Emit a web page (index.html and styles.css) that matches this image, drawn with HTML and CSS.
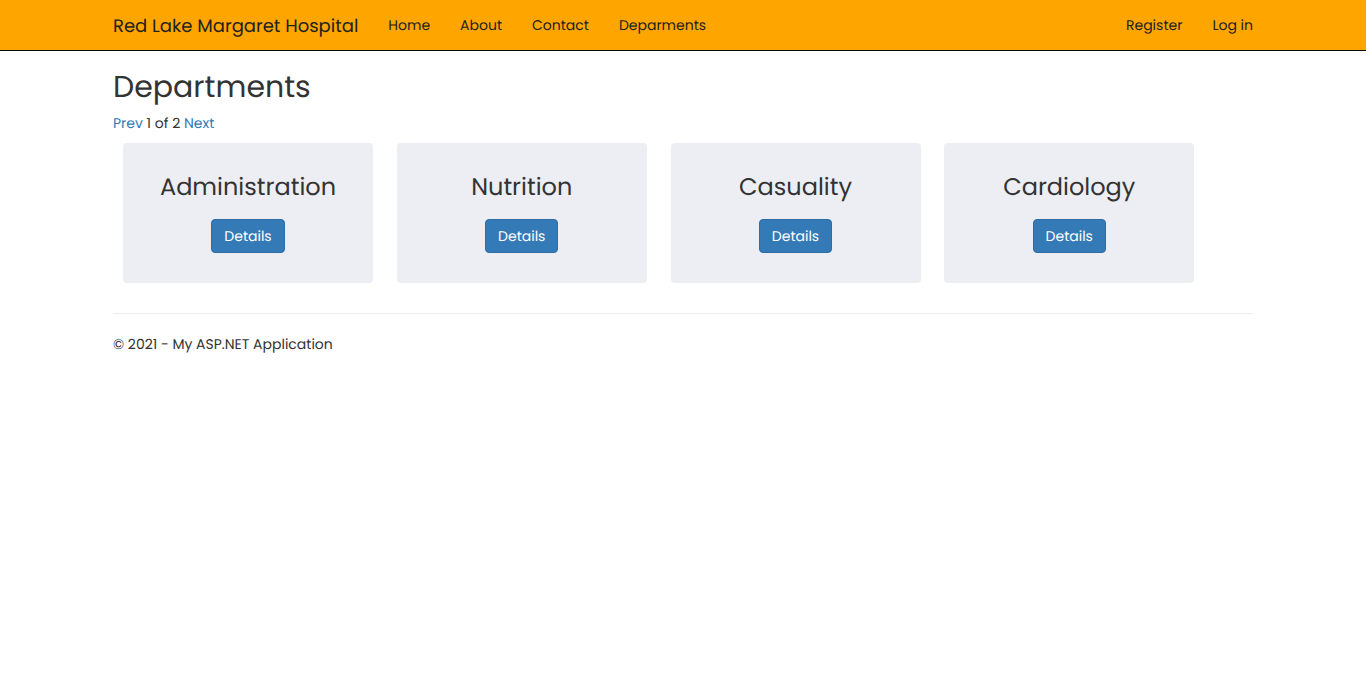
FILE: index.html
```html
<!DOCTYPE html>
<html lang="en">
<head>
<meta charset="utf-8">
<meta name="viewport" content="width=device-width, initial-scale=1">
<title>Departments</title>
<link rel="stylesheet" href="styles.css">
</head>
<body>
<header class="navbar">
  <nav class="container navbar-inner">
    <a class="brand" href="#">Red Lake Margaret Hospital</a>
    <ul class="nav-list">
      <li><a href="#">Home</a></li>
      <li><a href="#">About</a></li>
      <li><a href="#">Contact</a></li>
      <li><a href="#">Deparments</a></li>
    </ul>
    <ul class="nav-list nav-account">
      <li><a href="#">Register</a></li>
      <li><a href="#">Log in</a></li>
    </ul>
  </nav>
</header>
<main class="container">
  <h2 class="page-title">Departments</h2>
  <div class="pager"><a href="#">Prev</a> 1 of 2 <a href="#">Next</a></div>
  <div class="cards">
    <section class="card"><h3>Administration</h3><a class="btn" href="#">Details</a></section>
    <section class="card"><h3>Nutrition</h3><a class="btn" href="#">Details</a></section>
    <section class="card"><h3>Casuality</h3><a class="btn" href="#">Details</a></section>
    <section class="card"><h3>Cardiology</h3><a class="btn" href="#">Details</a></section>
  </div>
</main>
<footer class="container">
  <p class="copyright">© 2021 - My ASP.NET Application</p>
</footer>
</body>
</html>
```
FILE: styles.css
```css
* {
  box-sizing: border-box;
}

body {
  margin: 0;
  background: #fff;
  color: #333;
  font-family: Poppins, Inter, "Open Sans", sans-serif;
  font-size: 14px;
  line-height: 20px;
  text-rendering: geometricPrecision;
}

a {
  color: #337ab7;
  text-decoration: none;
}

.container {
  max-width: 1170px;
  margin: 0 auto;
  padding: 0 15px;
}

.navbar {
  background: #ffa500;
  border-bottom: 1px solid #080808;
}

.navbar-inner {
  display: flex;
  align-items: center;
  flex-wrap: wrap;
  gap: 0 30px;
  min-height: 50px;
}

.navbar a {
  color: #222;
}

.navbar .brand {
  padding: 17px 0 13px;
  font-size: 18px;
}

.nav-list {
  display: flex;
  gap: 30px;
  margin: 0;
  padding: 0;
  list-style: none;
}

.nav-account {
  margin-left: auto;
}

.page-title {
  margin: 20px 0 10px;
  font-size: 30px;
  font-weight: 400;
  line-height: 32px;
}

.card {
  display: inline-block;
  width: 250px;
  margin: 10px;
  padding: 30px 10px;
  border-radius: 4px;
  background: #edeef3;
  text-align: center;
  vertical-align: top;
}

.card h3 {
  margin: 0 0 16px;
  font-size: 24px;
  font-weight: 400;
  line-height: 30px;
}

.btn {
  display: inline-block;
  padding: 6px 12px;
  border: 1px solid #2e6da4;
  border-radius: 4px;
  background: #337ab7;
  color: #fff;
  vertical-align: top;
}

.copyright {
  margin: 20px 0 0;
  padding-top: 20px;
  border-top: 1px solid #eee;
}
```
